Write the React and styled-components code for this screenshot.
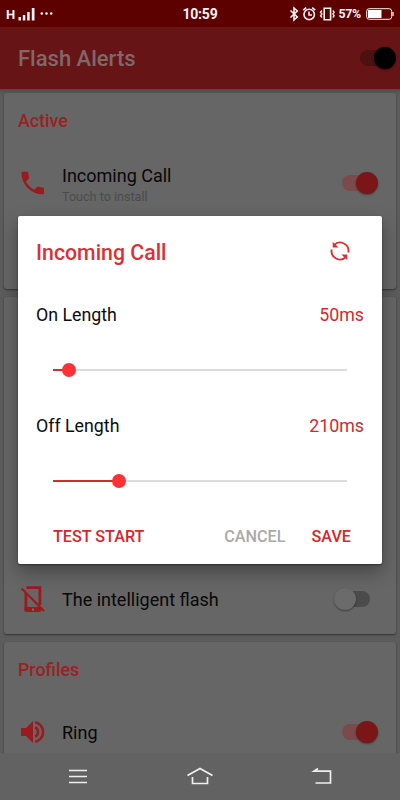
import React, { useState } from 'react';
import styled, { createGlobalStyle } from 'styled-components';

const GlobalStyle = createGlobalStyle`
   * {
     box-sizing: border-box;
   }

   body {
     margin: 0;
     font-family: Roboto, "Liberation Sans", sans-serif;
   }

   button {
     font: inherit;
     border: 0;
     padding: 0;
     background: none;
     cursor: pointer;
   }
`;

const Screen = styled.div`
   position: relative;
   display: flex;
   flex-direction: column;
   width: 400px;
   height: 800px;
   overflow: hidden;
   background: #5c5c5c;
`;

const StatusBar = styled.div`
   display: grid;
   grid-template-columns: 1fr auto 1fr;
   align-items: center;
   flex: none;
   height: 27px;
   padding: 1px 6px 0;
   background: #5c0000;
   color: #f8f2f2;
   font-size: 13px;
   font-weight: 700;

   svg {
     display: block;
   }
`;

const Signal = styled.div`
   display: flex;
   align-items: center;
   line-height: 14px;
   padding-top: 1px;
`;

const Clock = styled.span`
   font-size: 14px;
   line-height: 16px;
   letter-spacing: -0.2px;
`;

const StatusIcons = styled.div`
   display: flex;
   align-items: center;
   justify-content: flex-end;
   font-size: 12.3px;
   letter-spacing: -0.2px;
`;

const Percent = styled.span`
   margin: 0 5px 0 3px;
`;

const Header = styled.header`
   display: flex;
   align-items: center;
   justify-content: space-between;
   flex: none;
   height: 62px;
   padding: 0 4px 0 18px;
   background: #661416;
`;

const Title = styled.h1`
   margin: 1px 0 0;
   color: #806868;
   font-size: 22px;
   font-weight: 500;
`;

const Content = styled.main`
   display: flex;
   flex-direction: column;
   gap: 8px;
   flex: 1;
   min-height: 0;
   overflow: hidden;
   padding: 4px 4px 0;
   background: linear-gradient(#544848, #5c5c5c 5px);
`;

const Card = styled.section`
   display: flex;
   flex-direction: column;
   justify-content: ${props => props.$end ? 'flex-end' : 'flex-start'};
   flex: none;
   height: ${props => props.$height}px;
   padding: 0 14px;
   border-radius: 3px;
   background: #666;
   box-shadow: 0 1px 2px rgba(0, 0, 0, 0.45);
`;

const CardTitle = styled.h2`
   margin: 0;
   height: 56px;
   line-height: 56px;
   color: #9c1f22;
   font-size: 17.8px;
   font-weight: 500;
`;

const Row = styled.div`
   display: flex;
   align-items: center;
   height: 69px;
   padding-right: 4px;
`;

const RowIcon = styled.div`
   width: 44px;
   color: #991b1d;

   svg {
     display: block;
   }
`;

const RowText = styled.div`
   flex: 1;
   color: #080808;
   font-size: 18px;
   line-height: 22px;

   small {
     display: block;
     color: #4b4b4b;
     font-size: 12.6px;
     line-height: 20px;
   }
`;

const RowTextWithHint = styled(RowText)`
   padding-top: 5px;
`;

const Toggle = styled.button`
   position: relative;
   display: flex;
   align-items: center;
   justify-content: ${props => props.$on ? 'flex-end' : 'flex-start'};
   width: 36px;
   height: 24px;

   &::before {
     content: '';
     position: absolute;
     left: ${props => props.$on ? 0 : 8}px;
     width: 28px;
     height: 16px;
     border-radius: 8px;
     background: ${props => props.$track};
   }
`;

const Thumb = styled.span`
   position: relative;
   width: 22px;
   height: 22px;
   border-radius: 50%;
   background: ${props => props.$color};
   box-shadow: 0 1px 2px rgba(0, 0, 0, 0.4);
`;

const SwitchSlot = styled.div`
   margin: 0 ${props => props.$on ? 0 : 8}px 2px 0;
`;

const NavBar = styled.nav`
   display: flex;
   align-items: center;
   justify-content: space-around;
   flex: none;
   height: 47px;
   padding: 0 17px;
   background: #626262;
`;

const Overlay = styled.div`
   position: absolute;
   inset: 0;
   display: flex;
   justify-content: center;
   align-items: flex-start;
   padding-top: 216px;
`;

const Dialog = styled.div`
   width: 364px;
   height: 348px;
   padding: 0 18px;
   border-radius: 2px;
   background: #fff;
   box-shadow: 0 8px 18px rgba(0, 0, 0, 0.34), 0 1px 2px rgba(0, 0, 0, 0.4);
`;

const DialogHeader = styled.div`
   display: flex;
   align-items: center;
   justify-content: space-between;
   height: 72px;
   padding-right: 13px;
   color: #d93236;

   h2 {
     margin: 0;
     font-size: 21.3px;
     font-weight: 500;
   }

   svg {
     display: block;
     margin-bottom: 2px;
   }
`;

const Setting = styled.div`
   height: 111px;
`;

const SettingLabel = styled.div`
   display: flex;
   justify-content: space-between;
   height: 52px;
   line-height: 53px;
   color: #0c0c0c;
   font-size: 17.8px;

   span:last-child {
     color: #cf2b2f;
   }
`;

const Slider = styled.div`
   display: flex;
   align-items: center;
   height: 59px;
   padding: 0 17px;
`;

const Rail = styled.div`
   display: flex;
   align-items: center;
   width: 100%;
   height: 2px;
   background: #dcdcdc;
`;

const Fill = styled.div`
   height: 2px;
   background: #d42d31;
`;

const Knob = styled.div`
   width: 14px;
   height: 14px;
   margin-left: -7px;
   border-radius: 50%;
   background: #fd3236;
`;

const Actions = styled.div`
   display: flex;
   align-items: center;
   height: 52px;
   padding: 0 13px 0 17px;
`;

const ActionButton = styled.button`
   color: ${props => props.$muted ? '#aaa' : '#d3282c'};
   font-size: 16.2px;
   font-weight: 500;
   margin-right: ${props => props.$first ? 'auto' : props.$muted ? '26px' : '0'};
`;

const PhoneIcon = () => (
   <svg width="30" height="30" viewBox="0.2 0.8 24 24" fill="currentColor">
      <path d="M6.62 10.79a15.1 15.1 0 0 0 6.59 6.59l2.2-2.2a1 1 0 0 1 1.02-.24 11.4 11.4 0 0 0 3.57.57 1 1 0 0 1 1 1V20a1 1 0 0 1-1 1A17 17 0 0 1 3 4a1 1 0 0 1 1-1h3.5a1 1 0 0 1 1 1c0 1.25.2 2.45.57 3.57a1 1 0 0 1-.25 1.02z" />
   </svg>
);

const PhoneOffIcon = () => (
   <svg width="30" height="30" viewBox="0.5 1 30 30" fill="none" stroke="currentColor">
      <path d="M9 3.6H22.4V21M8.4 9V26H22.4" strokeWidth="2.8" />
      <path d="M7 23H22.5L24 25V26.5Q23.5 28 21.5 28H9Q7 27.5 7 25.5Z" fill="currentColor" stroke="none" />
      <path d="M4.2 4.5L26.5 27" strokeWidth="2.1" />
      <circle cx="15.5" cy="25.7" r="1.1" fill="#777" stroke="none" />
   </svg>
);

const VolumeIcon = () => (
   <svg width="30" height="30" viewBox="0 1 30 30" fill="none" stroke="currentColor" strokeWidth="2.6">
      <path d="M3 11H8L15 4V26L8 19H3Z" fill="currentColor" stroke="none" />
      <path d="M17.2 10.2A5.5 5.5 0 0 1 17.2 19.8M17.2 5.3A9.9 9.9 0 0 1 17.2 24.7" />
   </svg>
);

const RefreshIcon = () => (
   <svg width="22" height="22" viewBox="0 0 22 22" fill="none" stroke="currentColor" strokeWidth="1.9">
      <path d="M5 5.1A8.4 8.4 0 0 1 19.3 12.5M2.7 9.5A8.4 8.4 0 0 0 17 16.9" />
      <path d="M3.7 1.8V7.5H9.6ZM18.3 20.2V14.5H12.4Z" fill="currentColor" stroke="none" />
   </svg>
);

const SignalIcon = () => (
   <svg width="44" height="16" viewBox="0 0 44 16" fill="currentColor">
      <path d="M3.5 10h2.5v3.5h-2.5zM7.8 8h2.5V13.5h-2.5zM12.2 5h2.5V13.500h-2.5zM16.8 1h2.7V13.500h-2.7z" />
      <circle cx="26.8" cy="6.500" r="1.3" />
      <circle cx="31.5" cy="6.500" r="1.3" />
      <circle cx="36.2" cy="6.500" r="1.3" />
   </svg>
);

const StatusGlyphs = () => (
   <svg width="46" height="16" viewBox="0 0 46 16" fill="none" stroke="currentColor" strokeWidth="1.6">
      <path d="M1.5 4.5L8.3 11 5 14V2L8.3 5 1.5 11.5" />
      <circle cx="20.2" cy="8.4" r="5.2" />
      <path d="M20 5.5V9H23M14.2 4.2L17.2 1.7M26.2 4.2L23.2 1.7" />
      <path d="M35.2 2.3H41.6V13.7H35.2Z" />
      <path d="M33 4.5L31.5 6.3 33 8 31.5 9.7 33 11.5M43.8 4.5L45.2 6.3 43.8 8 45.2 9.7 43.8 11.5" strokeWidth="1.3" />
   </svg>
);

const BatteryIcon = () => (
   <svg width="28" height="12" viewBox="0 0 28 12" fill="none" stroke="currentColor">
      <rect x="0.7" y="0.7" width="25" height="10.6" rx="2.5" strokeWidth="1" />
      <path d="M2 2H15.5V10H2Z" fill="#fff" stroke="none" />
      <path d="M27 4V8" strokeWidth="1.3" />
   </svg>
);

const Switch = ({ label, initial, thumb, track }) => {
   const [on, setOn] = useState(initial);

   return (
      <Toggle type="button" role="switch" aria-label={label} aria-checked={on} $on={on} $track={track} onClick={() => setOn(!on)}>
         <Thumb $color={thumb} />
      </Toggle>
   );
};

const Option = ({ icon, label, hint, on = true }) => {
   const Text = hint ? RowTextWithHint : RowText;

   return (
      <Row>
         <RowIcon>{icon}</RowIcon>
         <Text>
            {label}
            {hint && <small>{hint}</small>}
         </Text>
         <SwitchSlot $on={on}>
            <Switch label={label} initial={on} thumb={on ? '#7a1618' : '#6b6b6b'} track={on ? '#7b4a4b' : '#4b4b4b'} />
         </SwitchSlot>
      </Row>
   );
};

const settings = [
   { name: 'On Length', value: 50, percent: 5.4 },
   { name: 'Off Length', value: 210, percent: 22.3 }
];

const App = () => (
   <>
      <GlobalStyle />
      <Screen>
         <StatusBar>
            <Signal>H<SignalIcon /></Signal>
            <Clock>10:59</Clock>
            <StatusIcons>
               <StatusGlyphs />
               <Percent>57%</Percent>
               <BatteryIcon />
            </StatusIcons>
         </StatusBar>
         <Header>
            <Title>Flash Alerts</Title>
            <Switch label="Flash Alerts" initial thumb="#000" track="#4c1011" />
         </Header>
         <Content>
            <Card $height={196}>
               <CardTitle>Active</CardTitle>
               <Option icon={<PhoneIcon />} label="Incoming Call" hint="Touch to install" />
            </Card>
            <Card $height={337} $end>
               <Option icon={<PhoneOffIcon />} label="The intelligent flash" on={false} />
            </Card>
            <Card $height={130}>
               <CardTitle>Profiles</CardTitle>
               <Option icon={<VolumeIcon />} label="Ring" />
            </Card>
         </Content>
         <NavBar>
            <svg width="28" height="28" viewBox="0 0 28 28" fill="none" stroke="#eee" strokeWidth="1.7">
               <path d="M5 7.5H23M5 13.5H23M5 19.5H23" />
            </svg>
            <svg width="28" height="28" viewBox="0 0 28 28" fill="none" stroke="#eee" strokeWidth="1.7">
               <path d="M1.5 12.5L14 5.5L26.5 12.5M6.5 14V20.5H21.5V14" />
            </svg>
            <svg width="28" height="28" viewBox="0 0 28 28" fill="none" stroke="#eee" strokeWidth="1.7">
               <path d="M10 5.5L6 8.2H22.5V20H7.5" />
            </svg>
         </NavBar>
         <Overlay>
            <Dialog role="dialog" aria-label="Incoming Call">
               <DialogHeader>
                  <h2>Incoming Call</h2>
                  <RefreshIcon />
               </DialogHeader>
               {settings.map(({ name, value, percent }) => (
                  <Setting key={name}>
                     <SettingLabel>
                        <span>{name}</span>
                        <span>{value}ms</span>
                     </SettingLabel>
                     <Slider>
                        <Rail>
                           <Fill style={{ width: `${percent}%` }} />
                           <Knob />
                        </Rail>
                     </Slider>
                  </Setting>
               ))}
               <Actions>
                  <ActionButton $first>TEST START</ActionButton>
                  <ActionButton $muted>CANCEL</ActionButton>
                  <ActionButton>SAVE</ActionButton>
               </Actions>
            </Dialog>
         </Overlay>
      </Screen>
   </>
);

export default App;
